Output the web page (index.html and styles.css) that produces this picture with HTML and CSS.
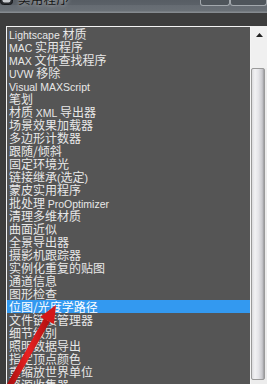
FILE: index.html
```html
<!DOCTYPE html>
<html>
<head>
<meta charset="utf-8">
<link rel="stylesheet" href="styles.css">
</head>
<body>
<div class="window">
  <div class="titlebar">
    <svg class="appicon" width="13" height="13" viewBox="0 0 13 13">
      <rect x="0.5" y="0.5" width="12" height="12" rx="3" fill="#2a2d31" stroke="#15171a"/>
      <rect x="2.5" y="2.5" width="8" height="8" rx="2" fill="#c9ccd0"/>
    </svg>
    <span class="title">实用程序</span>
    <div class="winbtns">
      <span class="winbtn b1"></span>
      <span class="winbtn b2"></span>
    </div>
  </div>
  <div class="band"></div>
  <div class="main">
    <ul class="list">
      <li><span class="lat">Lightscape</span> 材质</li>
      <li><span class="lat">MAC</span> 实用程序</li>
      <li><span class="lat">MAX</span> 文件查找程序</li>
      <li><span class="lat">UVW</span> 移除</li>
      <li><span class="lat">Visual MAXScript</span></li>
      <li>笔划</li>
      <li>材质 <span class="lat">XML</span> 导出器</li>
      <li>场景效果加载器</li>
      <li>多边形计数器</li>
      <li>跟随/倾斜</li>
      <li>固定环境光</li>
      <li>链接继承<span class="lat">(</span>选定<span class="lat">)</span></li>
      <li>蒙皮实用程序</li>
      <li>批处理 <span class="lat">ProOptimizer</span></li>
      <li>清理多维材质</li>
      <li>曲面近似</li>
      <li>全景导出器</li>
      <li>摄影机跟踪器</li>
      <li>实例化重复的贴图</li>
      <li>通道信息</li>
      <li>图形检查</li>
      <li class="sel">位图/光度学路径</li>
      <li>文件链接管理器</li>
      <li>细节级别</li>
      <li>照明数据导出</li>
      <li>指定顶点颜色</li>
      <li>重缩放世界单位</li>
      <li>资源收集器</li>
    </ul>
    <div class="scrollbar">
      <div class="sb-top">
        <svg class="uparrow" width="7" height="4" viewBox="0 0 7 4"><path d="M3.5 0 L7 4 L0 4 Z" fill="#222"/></svg>
      </div>
      <div class="thumb"></div>
      <div class="sb-rest"></div>
    </div>
  </div>
  <svg class="redarrow" width="267" height="384" viewBox="0 0 267 384">
    <defs>
      <linearGradient id="rg" x1="0" y1="0" x2="1" y2="0">
        <stop offset="0" stop-color="#a00c0c"/>
        <stop offset="0.5" stop-color="#e82222"/>
        <stop offset="1" stop-color="#b01010"/>
      </linearGradient>
    </defs>
    <path d="M44 318.5 L49.8 321.8 L13 386 L6 386 Z" fill="url(#rg)"/>
    <path d="M56 305 L40 317 L54 324 Z" fill="#d41818"/>
  </svg>
</div>
</body>
</html>
```
FILE: styles.css
```css
* { box-sizing: border-box; }
html, body { margin: 0; padding: 0; }
body {
  width: 267px;
  height: 384px;
  overflow: hidden;
  background: #3c3c3c;
  font-family: "Noto Sans CJK SC", "Liberation Sans", sans-serif;
}
.window { position: relative; width: 267px; height: 384px; }
.titlebar {
  height: 13px;
  display: flex;
  align-items: flex-start;
  background: linear-gradient(#575d64 0, #5b6168 5px, #656b72 5px, #6a7076 11px, #858a8f 12px, #858a8f 13px);
  overflow: hidden;
}
.appicon { margin-top: -8px; margin-left: 0; flex: none; }
.title {
  margin-left: 5px;
  margin-top: -8px;
  font-size: 12.5px;
  line-height: 13px;
  color: #141414;
  text-shadow: 0 0 4px rgba(255,255,255,0.75);
  letter-spacing: 0.3px;
}
.winbtns { margin-left: auto; display: flex; height: 6px; }
.winbtn {
  display: block;
  height: 6px;
  border: 1px solid #a3a8ad;
  border-top: none;
  border-radius: 0 0 3px 3px;
  background: #4f555b;
}
.b1 { width: 30px; }
.b2 { width: 37px; }
.band { height: 13px; background: #3d3d3d; }
.main { display: flex; padding-left: 6px; height: 358px; }
.list {
  list-style: none;
  margin: 0;
  padding: 0;
  width: 245px;
  border-top: 1px solid #f4f4f4;
  border-left: 1px solid #f4f4f4;
  border-right: 1px solid #f4f4f4;
  background: #555555;
  overflow: hidden;
}
.list li {
  height: 13px;
  line-height: 13px;
  padding-left: 2px;
  font-size: 12px;
  color: #e8e8e8;
  white-space: nowrap;
}
.list li.sel { background: #3399f0; color: #ffffff; }
.lat { font-family: "Liberation Sans", sans-serif; font-size: 10.5px; }
.scrollbar {
  width: 16px;
  display: flex;
  flex-direction: column;
  background: #ececec;
}
.sb-top {
  height: 42px;
  background: #f0f0f0;
  display: flex;
  justify-content: center;
  padding-top: 7px;
}
.uparrow { display: block; }
.thumb {
  height: 312px;
  border: 1px solid #9a9a9a;
  border-radius: 2px;
  background: linear-gradient(to right, #dcdcdf 0, #f2f2f4 25%, #e4e4e8 55%, #c8c8cc 85%, #9a9a9e 100%);
  margin-right: 2px;
}
.sb-rest { flex: 1; background: #ececec; }
.redarrow { position: absolute; left: 0; top: 0; pointer-events: none; }
```
